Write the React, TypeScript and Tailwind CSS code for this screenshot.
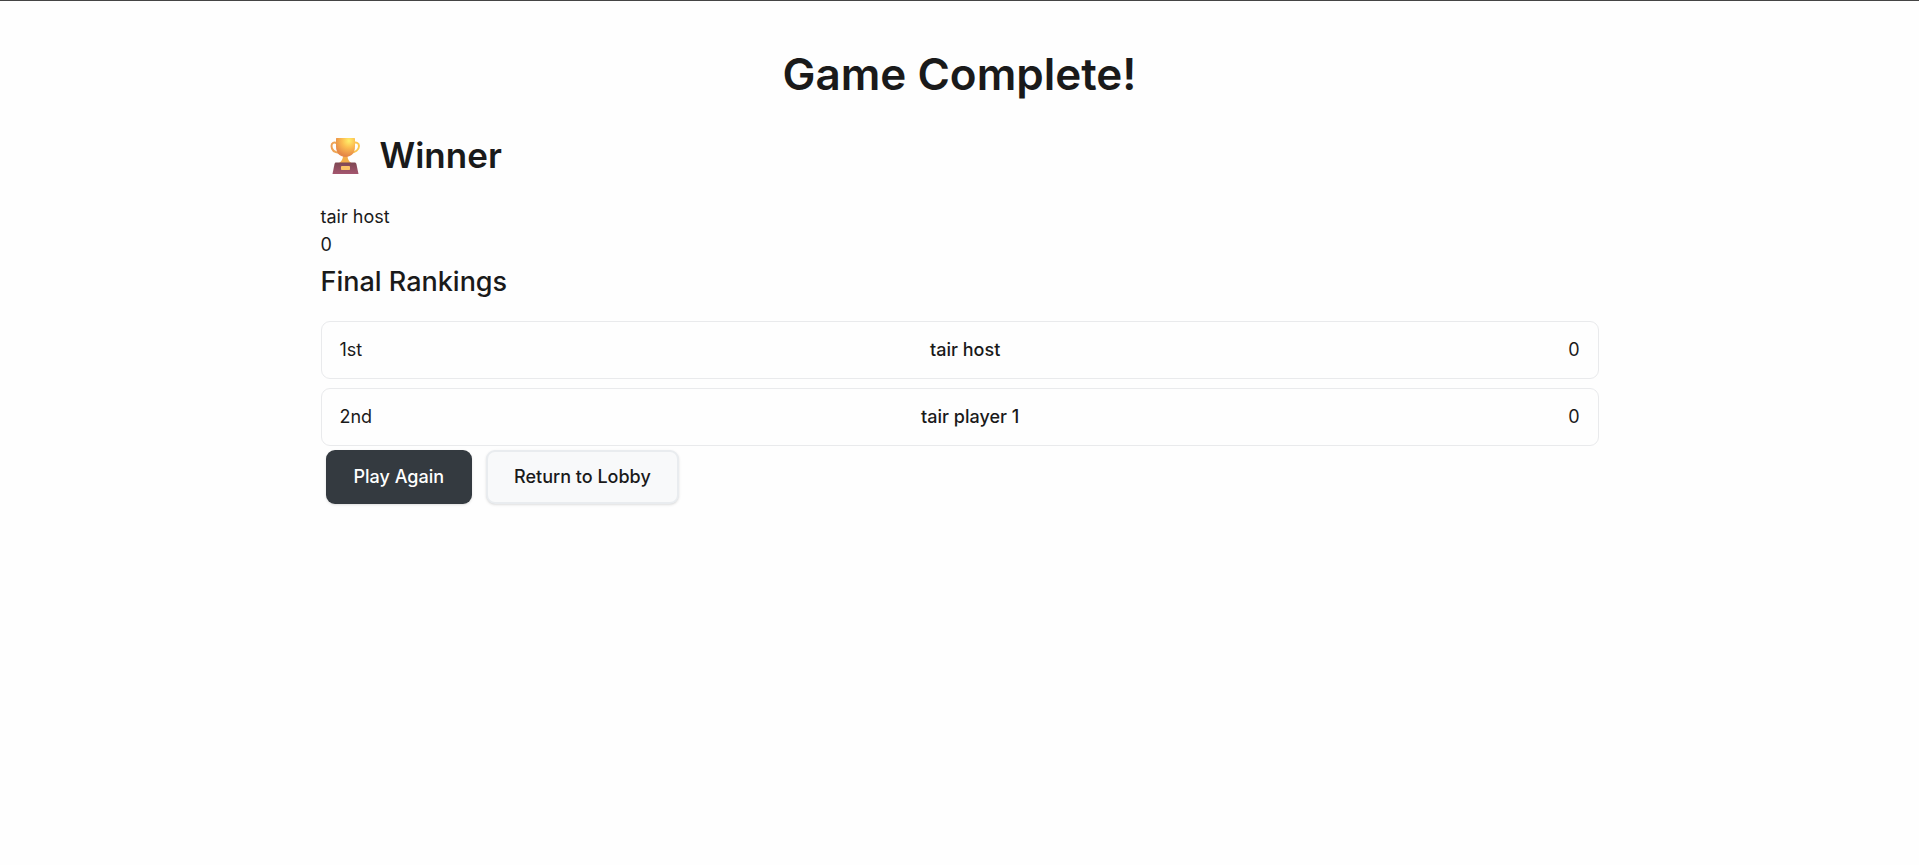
const rankings = [
  { place: "1st", name: "tair host", score: 0 },
  { place: "2nd", name: "tair player 1", score: 0 },
];

function Trophy() {
  return (
    <svg viewBox="0 0 48 48" className="h-12 w-12 shrink-0" aria-hidden="true">
      <defs>
        <radialGradient id="cup" cx="0.68" cy="0.15" r="0.8">
          <stop offset="0" stopColor="#fff06a" />
          <stop offset="0.45" stopColor="#fcbd50" />
          <stop offset="1" stopColor="#e58748" />
        </radialGradient>
        <linearGradient id="handle" x1="0" x2="1" y1="0" y2="0">
          <stop offset="0" stopColor="#eda055" />
          <stop offset="1" stopColor="#fbc950" />
        </linearGradient>
        <linearGradient id="base" x1="0" x2="0" y1="0" y2="1">
          <stop offset="0" stopColor="#7d4752" />
          <stop offset="1" stopColor="#a5566f" />
        </linearGradient>
      </defs>
      <path
        d="M16 12.5c-3-2-5.500-.5-5.500 2.500 0 4 3.500 6.500 8 7M32 12.500c3-2 6-.5 6 2.500 0 4-4 6.500-8.500 7"
        fill="none"
        stroke="url(#handle)"
        strokeWidth="2"
        strokeLinecap="round"
      />
      <path d="M22 24h4.500c0 4 1 6 4.500 8.500H17.500C21 30 22 28 22 24z" fill="#f3ad4a" />
      <path d="M15.500 7h17.500c.6 0 1 .4 1 1v7.500c0 7-4.500 10.500-9.500 10.500S15 22.500 15 15.500V8c0-.6.2-1 .5-1z" fill="url(#cup)" />
      <path d="M15 31.500h18.500c1 0 1.700.6 1.900 1.500L37.500 43H11.500l2-10c.2-.9.700-1.500 1.500-1.500z" fill="url(#base)" />
      <rect x="20" y="35" width="9" height="4" rx="0.8" fill="#fbc267" />
    </svg>
  );
}

export default function App() {
  return (
    <div className="min-h-screen border-t border-[#444444] bg-[#fefefe] px-4 font-['Inter',sans-serif] text-lg leading-7 text-[#1a1a1a]">
      <main className="mx-auto max-w-[1278px] pt-11">
        <h1 className="text-center text-[44px] leading-[58px] font-semibold">Game Complete!</h1>
        <section>
          <h2 className="mt-7 flex h-12 items-center gap-[11px] text-[35px] font-semibold">
            <Trophy />
            Winner
          </h2>
          <p className="mt-6">tair host</p>
          <p>0</p>
        </section>
        <section>
          <h3 className="mt-1 text-[27px] leading-[38px] font-medium">Final Rankings</h3>
          <ol className="mt-5 flex flex-col gap-[9px]">
            {rankings.map((r) => (
              <li
                key={r.place}
                className="flex items-center justify-between rounded-[9px] border border-[#e9eaec] px-[18px] py-[14px]"
              >
                <span>{r.place}</span>
                <span className="font-medium">{r.name}</span>
                <span>{r.score}</span>
              </li>
            ))}
          </ol>
        </section>
        <div className="mt-1 flex gap-[14px] px-[5px]">
          <button className="h-[54px] rounded-[9px] bg-[#343a40] px-7 font-medium text-white shadow-sm">
            Play Again
          </button>
          <button className="h-[54px] rounded-[9px] border-2 border-[#e9ecef] bg-[#f8f9fa] px-[26px] font-medium shadow-sm">
            Return to Lobby
          </button>
        </div>
      </main>
    </div>
  );
}
